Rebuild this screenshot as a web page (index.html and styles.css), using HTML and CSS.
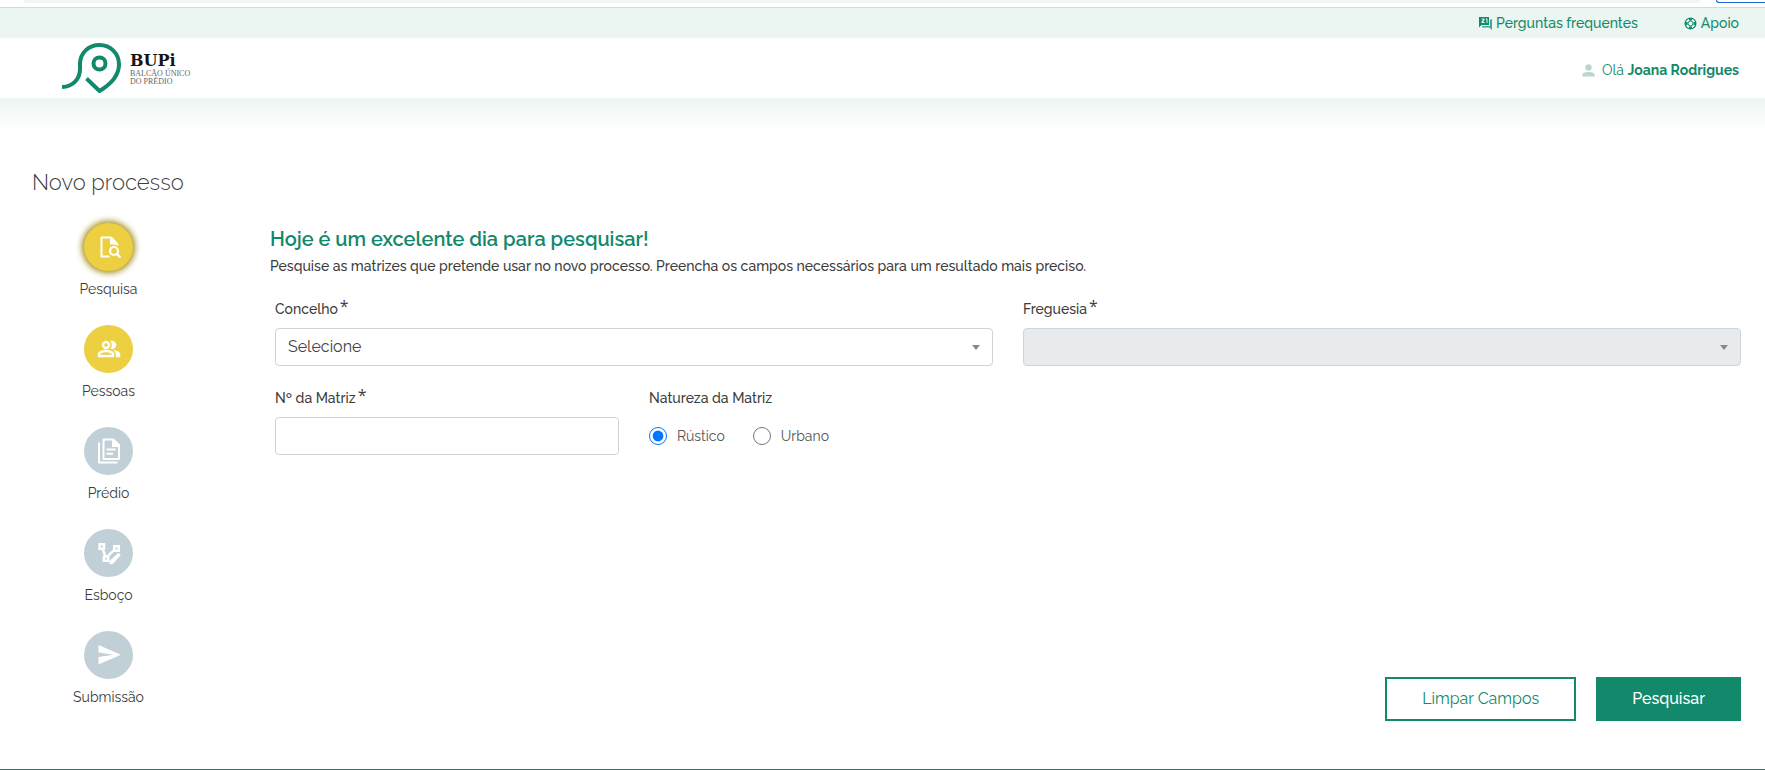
FILE: index.html
```html
<!DOCTYPE html>
<html lang="pt">
<head>
<meta charset="utf-8">
<title>BUPi - Novo processo</title>
<link rel="stylesheet" href="styles.css">
</head>
<body>
<div class="browser-edge">
  <div class="address-bar"></div>
  <div class="browser-pill"></div>
</div>

<nav class="topbar">
  <a class="topbar-link" href="#faq">
    <svg class="icon-small" viewBox="0 0 13 13" aria-hidden="true"><path fill="currentColor" fill-rule="evenodd" d="M0 0h10v8H2.500L0 10.500zM2.500 1.500v1h1.700L2.500 4.700v1.300h3V5H4l1.500-2V1.500zM6.800 1.500v1h.7V6h1V1.500z"/><path fill="currentColor" opacity=".75" d="M11 2.500h2V13l-2.500-2.500H3V9h8z"/></svg>
    <span>Perguntas frequentes</span>
  </a>
  <a class="topbar-link" href="#apoio">
    <svg class="icon-small" viewBox="0 0 13 13" aria-hidden="true"><g fill="none" stroke="currentColor"><circle cx="6.500" cy="6.500" r="5.400" stroke-width="1.200"/><circle cx="6.500" cy="6.500" r="2.500" stroke-width="1"/><path stroke-width="3" d="M6.500 1v2.500M6.500 9.500V12M1 6.500h2.500M9.500 6.500H12"/></g></svg>
    <span>Apoio</span>
  </a>
</nav>

<header class="header">
  <a class="logo" href="#inicio">
    <svg class="logo-mark" viewBox="0 0 60 50" aria-hidden="true"><g fill="none" stroke="#12896b" stroke-width="4"><path d="M0 44C11 43.500 18 36 18 26V21C18 10 26.500 2 37.500 2S57 10.500 57 21.500C57 33 47.500 42 37.500 48L24.500 35.500"/><circle cx="37.500" cy="20.500" r="6"/></g></svg>
    <span class="logo-text">
      <span class="logo-name">BUPi</span>
      <span class="logo-tag">BALCÃO ÚNICO</span>
      <span class="logo-tag">DO PRÉDIO</span>
    </span>
  </a>
  <div class="user">
    <svg class="icon-user" viewBox="0 0 13 13" aria-hidden="true"><circle cx="6.500" cy="3.500" r="3.200" fill="currentColor"/><path fill="currentColor" d="M.3 12.500v-1.800C.3 8.800 3.500 8 6.500 8s6.200.8 6.200 2.700v1.800z"/></svg>
    <span>Olá <b>Joana Rodrigues</b></span>
  </div>
</header>

<main class="main">
  <h1 class="page-title">Novo processo</h1>
  <div class="layout">
    <ol class="steps">
      <li class="step">
        <span class="step-dot step-active"><svg class="step-icon" viewBox="0 0 24 24"><path fill="none" stroke="#fff" stroke-width="2" stroke-linejoin="round" d="M12.500 21.500H4.500v-19H14l6 6.500"/><path fill="#fff" d="M13 2h1.500L21 8.500V11l-3-1.500h-5z"/><circle cx="17" cy="16" r="4" fill="none" stroke="#fff" stroke-width="2.200"/><path stroke="#fff" stroke-width="2.400" d="M19.500 18.500l4 4"/></svg></span>
        <span class="step-label">Pesquisa</span>
      </li>
      <li class="step">
        <span class="step-dot step-open"><svg class="step-icon" viewBox="0 0 24 24"><path fill="#fff" stroke="#fff" stroke-width=".5" d="M16.670 13.130C18.040 14.060 19 15.320 19 17v3h4v-3c0-2.180-3.570-3.470-6.330-3.870zM15 12c2.210 0 4-1.790 4-4s-1.790-4-4-4c-.47 0-.91.1-1.330.24C14.500 5.270 15 6.580 15 8s-.5 2.730-1.330 3.760c.42.14.86.24 1.330.24zM9 12c2.210 0 4-1.790 4-4s-1.790-4-4-4-4 1.790-4 4 1.790 4 4 4zm0-6c1.100 0 2 .9 2 2s-.9 2-2 2-2-.9-2-2 .9-2 2-2zM9 13c-2.670 0-8 1.340-8 4v3h16v-3c0-2.660-5.330-4-8-4zm6 5H3v-.99C3.200 16.290 6.300 15 9 15s5.800 1.290 6 2v1z"/></svg></span>
        <span class="step-label">Pessoas</span>
      </li>
      <li class="step">
        <span class="step-dot"><svg class="step-icon" viewBox="0 0 24 24"><g fill="none" stroke="#fff" stroke-width="2" stroke-linejoin="round"><path d="M2 3.500V23.500H20.500"/><path d="M6.500 .5h9.500L22 6v14H6.500z"/><path d="M9.500 10.500h9M9.500 14.800h6.500"/></g><path fill="#fff" d="M15 0h2l5.500 5.500V8H15z"/></svg></span>
        <span class="step-label">Prédio</span>
      </li>
      <li class="step">
        <span class="step-dot"><svg class="step-icon" viewBox="0 0 24 24"><path fill="none" stroke="#fff" stroke-width="2.400" d="M5.500 8l3.300 8M10.500 15.500L18 8"/><path fill="#fff" fill-rule="evenodd" d="M1.300 2h7v7h-7zm2.600 2.600v1.800h1.800V4.600zM16 4h7v7h-7zm2.600 2.600v1.800h1.800V6.600zM5.600 14.500h6.800V21H5.600zm2.500 2.400v1.700h1.800v-1.700zM12.500 23.300v-3.300l8.500-7.700c1-.6 3.200 1.200 2.400 2.300L15.500 23.300z"/></svg></span>
        <span class="step-label">Esboço</span>
      </li>
      <li class="step">
        <span class="step-dot"><svg class="step-icon" viewBox="0 0 24 24"><path fill="#fff" d="M1.500 2L24 11.800 1.500 21.500V14l15-2.200-15-2.200z"/></svg></span>
        <span class="step-label">Submissão</span>
      </li>
    </ol>

    <form class="content">
      <h2 class="lead">Hoje é um excelente dia para pesquisar!</h2>
      <p class="intro">Pesquise as matrizes que pretende usar no novo processo. Preencha os campos necessários para um resultado mais preciso.</p>
      <div class="fields">
        <div class="field field-wide">
          <label class="label" for="concelho">Concelho<span class="required">*</span></label>
          <div class="select-box">
            <select class="control" id="concelho"><option>Selecione</option></select>
            <svg class="caret" viewBox="0 0 8 5" aria-hidden="true"><path d="M0 0h8L4 5z" fill="#888"/></svg>
          </div>
        </div>
        <div class="field field-wide">
          <label class="label" for="freguesia">Freguesia<span class="required">*</span></label>
          <div class="select-box">
            <select class="control" id="freguesia" disabled><option></option></select>
            <svg class="caret" viewBox="0 0 8 5" aria-hidden="true"><path d="M0 0h8L4 5z" fill="#888"/></svg>
          </div>
        </div>
        <div class="field">
          <label class="label" for="matriz">Nº da Matriz<span class="required">*</span></label>
          <input class="control" id="matriz" type="text">
        </div>
        <div class="field" role="radiogroup" aria-labelledby="natureza">
          <span class="label" id="natureza">Natureza da Matriz</span>
          <div class="radios">
            <label class="radio"><input type="radio" name="natureza" checked><span>Rústico</span></label>
            <label class="radio"><input type="radio" name="natureza"><span>Urbano</span></label>
          </div>
        </div>
      </div>
      <div class="actions">
        <button class="button" type="reset">Limpar Campos</button>
        <button class="button button-primary" type="submit">Pesquisar</button>
      </div>
    </form>
  </div>
</main>
<footer class="footer"></footer>
</body>
</html>
```
FILE: styles.css
```css
* {
  box-sizing: border-box;
}

body {
  margin: 0;
  min-height: 100vh;
  display: flex;
  flex-direction: column;
  background: #fff;
  color: #3c3c3c;
  font: 14px/20px Raleway, Lato, sans-serif;
}

.browser-edge {
  height: 8px;
  display: flex;
  align-items: flex-start;
  gap: 16px;
  padding-left: 24px;
  border-bottom: 1px solid #d5dbd9;
  overflow: hidden;
}

.address-bar {
  flex: 1;
  height: 3px;
  border-radius: 0 0 14px 14px;
  background: #f1f3f4;
}

.browser-pill {
  width: 49px;
  height: 3px;
  border: 1px solid #1b66d2;
  border-width: 0 0 1px 1px;
  border-radius: 0 0 0 14px;
}

.topbar {
  height: 30px;
  display: flex;
  justify-content: flex-end;
  align-items: center;
  gap: 46px;
  padding: 0 26px;
  background: #ebf5f1;
  font-weight: 500;
}

.topbar-link {
  display: flex;
  align-items: center;
  gap: 4px;
  color: #12896b;
  text-decoration: none;
}

.icon-small {
  width: 13px;
  height: 13px;
}

.header {
  height: 60px;
  display: flex;
  justify-content: space-between;
  align-items: center;
  padding: 0 26px 0 62px;
}

.logo {
  display: flex;
  align-items: center;
  gap: 8px;
  color: #151515;
  text-decoration: none;
}

.logo-mark {
  width: 60px;
  height: 50px;
}

.logo-text {
  display: flex;
  flex-direction: column;
  padding-top: 2px;
}

.logo-name {
  font: bold 16px/18px "DejaVu Serif", serif;
}

.logo-tag {
  color: #666;
  font: 8px/8px "Liberation Serif", serif;
}

.user {
  display: flex;
  align-items: center;
  gap: 7px;
  padding-top: 4px;
  color: #12896b;
}

.icon-user {
  width: 13px;
  height: 13px;
  color: #b9d8c9;
}

.main {
  flex: 1;
  display: flex;
  flex-direction: column;
  padding: 68px 24px 48px 32px;
  background: linear-gradient(#ebf5f1, #fff 32px);
}

.page-title {
  margin: 0;
  font-size: 22px;
  line-height: 32px;
  font-weight: 300;
}

.layout {
  flex: 1;
  display: flex;
  padding-top: 25px;
}

.steps {
  width: 153px;
  margin: 0 85px 0 0;
  padding: 0;
  display: flex;
  flex-direction: column;
  gap: 26px;
  list-style: none;
}

.step {
  display: flex;
  flex-direction: column;
  align-items: center;
  gap: 8px;
}

.step-dot {
  width: 49px;
  height: 48px;
  display: grid;
  place-items: center;
  border-radius: 50%;
  background: #c1d0d7;
}

.step-open {
  background: #ecd042;
}

.step-active {
  background: #ecd042;
  box-shadow: 0 0 6px 2px #a08a10;
}

.step-icon {
  width: 24px;
  height: 24px;
  overflow: visible;
}

.content {
  flex: 1;
  display: flex;
  flex-direction: column;
}

.lead {
  margin: 0;
  padding-top: 3px;
  color: #12896b;
  font-size: 20px;
  line-height: 26px;
  font-weight: 600;
}

.intro {
  margin: 4px 0 22px;
  font-weight: 500;
}

.fields {
  display: grid;
  grid-template-columns: repeat(4, 1fr);
  gap: 21px 30px;
  padding-left: 5px;
}

.field {
  display: flex;
  flex-direction: column;
  gap: 9px;
}

.field-wide {
  grid-column: span 2;
}

.label {
  display: flex;
  height: 21px;
  align-items: center;
  font-weight: 500;
}

.required {
  align-self: flex-start;
  padding-left: 2px;
  font: 16px/16px "Open Sans", sans-serif;
}

.select-box {
  display: grid;
  align-items: center;
}

.select-box > * {
  grid-area: 1 / 1;
}

.caret {
  width: 8px;
  height: 5px;
  margin-right: 13px;
  justify-self: end;
  pointer-events: none;
}

.control {
  width: 100%;
  height: 38px;
  padding: 0 12px 1px;
  appearance: none;
  border: 1px solid #ced4da;
  border-radius: 4px;
  background: #fff;
  color: #444;
  font: inherit;
  font-size: 16px;
}

.control:disabled {
  background: #e7ebee;
  opacity: 1;
}

.radios {
  height: 38px;
  display: flex;
  align-items: center;
  gap: 28px;
}

.radio {
  display: flex;
  align-items: center;
  gap: 10px;
  color: #555;
}

.radio input {
  width: 18px;
  height: 18px;
  margin: 0;
}

.actions {
  margin-top: auto;
  display: flex;
  justify-content: flex-end;
  gap: 20px;
}

.button {
  height: 44px;
  padding: 0 35px;
  border: 2px solid #12896b;
  background: #fff;
  color: #12896b;
  font: inherit;
  font-size: 16px;
}

.button-primary {
  padding: 0 34px;
  background: #12896b;
  color: #fff;
  font-weight: 500;
}

.footer {
  border-top: 1px solid #12896b;
}
```
